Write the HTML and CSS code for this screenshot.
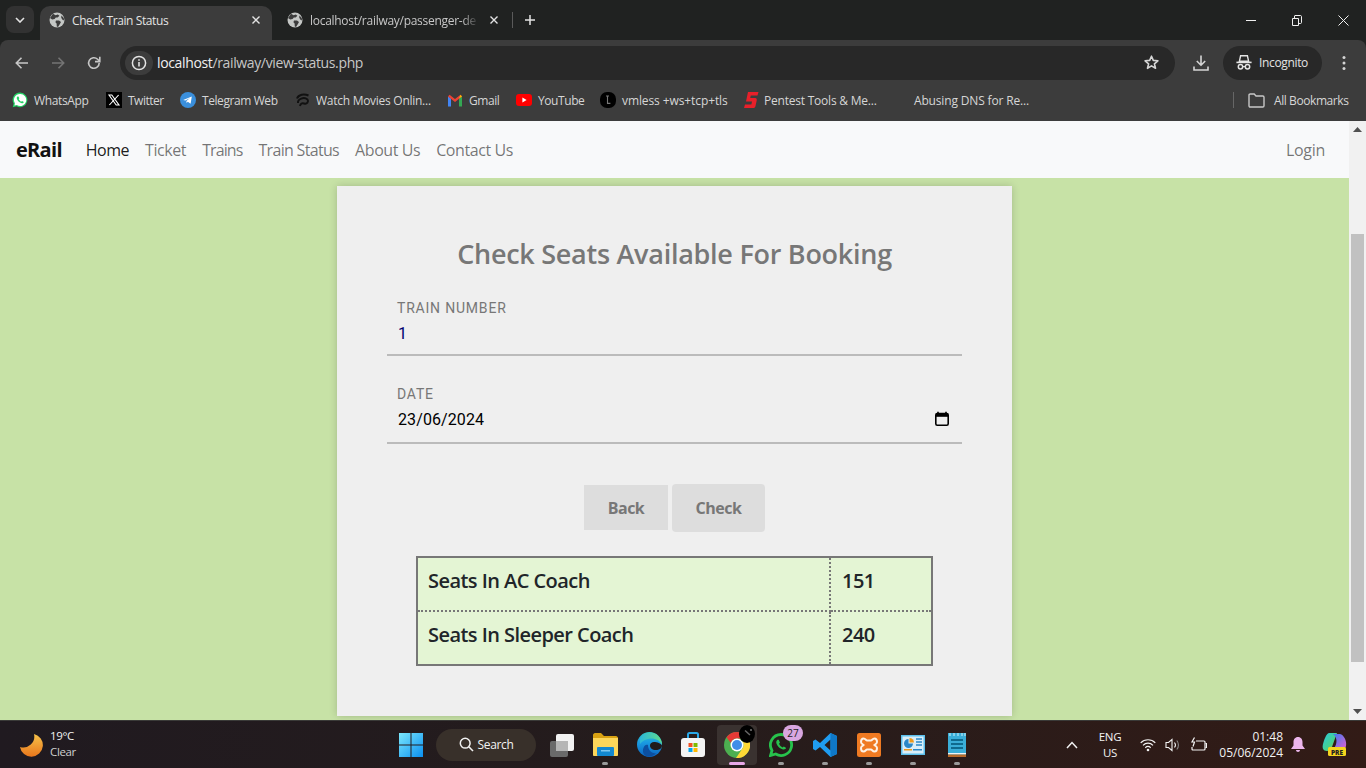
FILE: index.html
```html
<!DOCTYPE html>
<html lang="en">
<head>
<meta charset="utf-8">
<title>Check Train Status</title>
<link rel="stylesheet" href="styles.css">
</head>
<body>
<svg class="defs" width="0" height="0" aria-hidden="true">
  <symbol id="globe" viewBox="0 0 16 16">
    <circle cx="8" cy="8" r="7.5" fill="#c4c7c5"/>
    <path d="M4 1.8 6.6 3.2 8.8 2.4 10.4 3.8 8.6 5.6 6.8 5.4 5.6 7 3.2 7.6 1 6ZM7 8.6 10 8.4 12 10 10.6 12.6 9 15 7.8 14.6 7.6 11.6 6.4 10.2ZM12.4 3.6 14.8 6 15 8.6 13.2 7.6 12.2 5.6Z" fill="#3c3c3c"/>
  </symbol>
  <symbol id="close" viewBox="0 0 10 10">
    <path d="M1.5 1.5 8.5 8.5M8.5 1.5 1.5 8.5" fill="none" stroke="#e3e3e3" stroke-width="1.4"/>
  </symbol>
</svg>

<header class="chrome">
  <div class="tabstrip">
    <div class="tablist-btn"><svg width="10" height="6" viewBox="0 0 10 6"><path d="M1 1 5 5 9 1" fill="none" stroke="#e3e3e3" stroke-width="1.6"/></svg></div>
    <div class="tab tab-active">
      <svg class="fav" width="16" height="16"><use href="#globe"/></svg>
      <span class="tab-title">Check Train Status</span>
      <svg class="tab-x" width="10" height="10"><use href="#close"/></svg>
    </div>
    <div class="tab tab-idle">
      <svg class="fav" width="16" height="16"><use href="#globe"/></svg>
      <span class="tab-title tab-fade">localhost/railway/passenger-de</span>
      <svg class="tab-x" width="10" height="10"><use href="#close"/></svg>
    </div>
    <span class="tab-sep"></span>
    <svg class="tab-plus" width="12" height="12" viewBox="0 0 12 12"><path d="M6 1V11M1 6H11" stroke="#e3e3e3" stroke-width="1.5"/></svg>
    <div class="winctl">
      <span class="winbtn"><svg width="10" height="10" viewBox="0 0 10 10"><path d="M0 5.5H10" stroke="#f0f0f0"/></svg></span>
      <span class="winbtn"><svg width="10" height="11" viewBox="0 0 10 11"><path d="M.5 3.5H6.5V10.5H.5ZM2.5 3.5V1C2.5.8 2.7.5 3 .5H8.5C9 .5 9.5 1 9.5 1.5V7.5C9.5 8 9.2 8.5 8.5 8.5H6.5" fill="none" stroke="#f0f0f0"/></svg></span>
      <span class="winbtn"><svg width="11" height="11" viewBox="0 0 11 11"><path d="M.5.5 10.5 10.5M10.5.5.5 10.5" stroke="#f0f0f0"/></svg></span>
    </div>
  </div>

  <div class="toolbar">
    <div class="nav-ic">
      <svg width="16" height="16" viewBox="0 0 16 16"><path d="M14 8H2.5M7.5 2.8 2.3 8l5.2 5.2" fill="none" stroke="#c7c7c7" stroke-width="1.6"/></svg>
    </div>
    <div class="nav-ic">
      <svg width="16" height="16" viewBox="0 0 16 16"><path d="M2 8H13.5M8.5 2.8 13.7 8l-5.2 5.2" fill="none" stroke="#747474" stroke-width="1.6"/></svg>
    </div>
    <div class="nav-ic">
      <svg width="16" height="16" viewBox="0 0 16 16"><path d="M13.2 8A5.3 5.3 0 1 1 11.6 4.2L13.4 6" fill="none" stroke="#c7c7c7" stroke-width="1.6"/><path d="M13.8 1.8V6.6H9" fill="none" stroke="#c7c7c7" stroke-width="1.6"/></svg>
    </div>
    <div class="omnibox">
      <span class="info-chip"><svg width="16" height="16" viewBox="0 0 16 16"><circle cx="8" cy="8" r="6.6" fill="none" stroke="#e3e3e3" stroke-width="1.5"/><path d="M8 7V11.6M8 4.2V5.8" stroke="#e3e3e3" stroke-width="1.6"/></svg></span>
      <span class="url"><span class="url-host">localhost</span>/railway/view-status.php</span>
      <svg class="star" width="17" height="17" viewBox="0 0 17 17"><path d="M8.5 2.2 10.3 6.4 14.9 6.8 11.4 9.8 12.5 14.3 8.5 11.9 4.5 14.3 5.6 9.8 2.1 6.8 6.7 6.4Z" fill="none" stroke="#d5d5d5" stroke-width="1.6" stroke-linejoin="round"/></svg>
    </div>
    <svg class="dl" width="16" height="18" viewBox="0 0 16 18"><path d="M8 1.5V11M3.8 7 8 11.2 12.2 7M1 12.5V16H15V12.5" fill="none" stroke="#d5d5d5" stroke-width="1.6"/></svg>
    <div class="incog">
      <svg width="16" height="15" viewBox="0 0 16 15"><path d="M4.6 .8H11.4L12.6 6.2H3.4Z" fill="none" stroke="#e3e3e3" stroke-width="1.4"/><path d="M.4 7.4H15.600" stroke="#e3e3e3" stroke-width="1.600"/><circle cx="4.500" cy="11.800" r="2.200" fill="none" stroke="#e3e3e3" stroke-width="1.500"/><circle cx="11.500" cy="11.800" r="2.200" fill="none" stroke="#e3e3e3" stroke-width="1.500"/><path d="M6.800 11.600H9.200" stroke="#e3e3e3" stroke-width="1.200"/></svg>
      <span>Incognito</span>
    </div>
    <svg class="dots" width="4" height="16" viewBox="0 0 4 16"><circle cx="2" cy="2.5" r="1.5" fill="#d5d5d5"/><circle cx="2" cy="8" r="1.5" fill="#d5d5d5"/><circle cx="2" cy="13.5" r="1.5" fill="#d5d5d5"/></svg>
  </div>

  <nav class="bookmarks">
    <a class="bm b1"><svg width="16" height="16" viewBox="0 0 16 16"><path d="M8 .6A7.3 7.3 0 0 0 1.7 11.6L.7 15.3 4.5 14.3A7.3 7.3 0 1 0 8 .6Z" fill="#25d366"/><path d="M8 2A6 6 0 0 0 2.9 11.2L2.5 13.5 4.8 12.9A6 6 0 1 0 8 2Z" fill="#fff"/><path d="M5.6 4.4C5 4.8 4.6 5.6 4.8 6.6 5.2 8.6 7.4 11 9.8 11.3 10.8 11.4 11.6 10.8 11.8 10L10 8.9 9.2 9.7C8.2 9.4 7 8.1 6.7 7.1L7.4 6.3 6.4 4.4Z" fill="#25d366"/></svg><span>WhatsApp</span></a>
    <a class="bm b2"><svg width="16" height="16" viewBox="0 0 16 16"><rect width="16" height="16" fill="#000"/><path d="M3 3H5.8L13 13H10.2ZM12.6 3 3.4 13" fill="none" stroke="#fff" stroke-width="1.1"/></svg><span>Twitter</span></a>
    <a class="bm b3"><svg width="16" height="16" viewBox="0 0 16 16"><circle cx="8" cy="8" r="8" fill="#3a8fdc"/><path d="M3.2 8 11.8 4.4 10.6 11.8 7.8 9.8 6.6 11 6.4 8.9 10 6 5.4 8.6Z" fill="#fff"/></svg><span>Telegram Web</span></a>
    <a class="bm b4"><svg width="16" height="16" viewBox="0 0 16 16"><path d="M2 6.500C3.500 2.500 9 1.500 13.500 3.500M3 11C2.500 7 9 4.500 12.500 7.500 14 9.500 12 12.500 9 11.500 7 11 5.500 11.500 5 14" fill="none" stroke="#111" stroke-width="2"/></svg><span>Watch Movies Onlin...</span></a>
    <a class="bm b5"><svg width="16" height="13" viewBox="0 0 16 13"><path d="M1 12.5V2.5L4 4.5V12.5Z" fill="#4285f4"/><path d="M12 12.5V4.5L15 2.5V12.5Z" fill="#34a853"/><path d="M1 2.5 2.5 .8 8 5 13.5 .8 15 2.5 8 8Z" fill="#ea4335"/><path d="M12 4.5 13.5 .8 15 2.5Z" fill="#fbbc04"/></svg><span>Gmail</span></a>
    <a class="bm b6"><svg width="16" height="12" viewBox="0 0 16 12"><rect width="16" height="12" rx="3" fill="#f00"/><path d="M6.4 3.4V8.6L10.6 6Z" fill="#fff"/></svg><span>YouTube</span></a>
    <a class="bm b7"><svg width="16" height="16" viewBox="0 0 16 16"><rect width="16" height="16" rx="7" fill="#000"/><path d="M6 4H9M7.5 4V11.4H10.4" fill="none" stroke="#777" stroke-width="1.1"/></svg><span>vmless +ws+tcp+tls</span></a>
    <a class="bm b8"><svg width="16" height="18" viewBox="0 0 16 18"><path d="M5 1H15.500L14.500 4.500H7.800L7.200 7H12.200C13.600 7 14 8 13.700 9.400L12.500 15C12.200 16.400 11.400 17 10.200 17H1L2 13.400H8.400L9 10.400H3Z" fill="#e8202a"/></svg><span>Pentest Tools &amp; Me...</span></a>
    <a class="bm b9"><span>Abusing DNS for Re...</span></a>
    <span class="bm-sep"></span>
    <a class="bm b10"><svg width="17" height="15" viewBox="0 0 17 15"><path d="M1 2.2C1 1.5 1.5 1 2.2 1H6.2L8 3H14.8C15.5 3 16 3.5 16 4.2V12.8C16 13.5 15.5 14 14.8 14H2.2C1.5 14 1 13.5 1 12.8Z" fill="none" stroke="#c7c7c7" stroke-width="1.4"/></svg><span>All Bookmarks</span></a>
  </nav>
</header>

<div class="viewport">
  <div class="page">
    <div class="navbar">
      <span class="brand">eRail</span>
      <a class="nav-link nav-current">Home</a>
      <a class="nav-link">Ticket</a>
      <a class="nav-link nav-trains">Trains</a>
      <a class="nav-link nav-status">Train Status</a>
      <a class="nav-link">About Us</a>
      <a class="nav-link">Contact Us</a>
      <a class="nav-link nav-login">Login</a>
    </div>
    <main class="content">
      <section class="card">
        <h1 class="card-title">Check Seats Available For Booking</h1>
        <form class="form">
          <div class="field field-num">
            <label class="field-label" for="train">Train Number</label>
            <div class="field-row"><input id="train" class="field-input input-num" type="text" value="1"></div>
          </div>
          <div class="field field-date">
            <label class="field-label" for="date">Date</label>
            <div class="field-row">
              <input id="date" class="field-input" type="text" value="23/06/2024">
              <svg class="cal" width="16" height="16" viewBox="0 0 16 16"><path d="M4 .8V3M12 .8V3" stroke="#000" stroke-width="1.6"/><rect x="1.8" y="2.6" width="12.4" height="11.6" rx="1.4" fill="none" stroke="#000" stroke-width="1.6"/><rect x="2" y="3" width="12" height="2.8" fill="#000"/></svg>
            </div>
          </div>
          <div class="actions">
            <button type="button" class="btn btn-back">Back</button>
            <button type="button" class="btn btn-check">Check</button>
          </div>
        </form>
        <table class="seats">
          <tr><td class="seat-name">Seats In AC Coach</td><td class="seat-num">151</td></tr>
          <tr><td class="seat-name">Seats In Sleeper Coach</td><td class="seat-num">240</td></tr>
        </table>
      </section>
    </main>
  </div>
  <div class="scrollbar">
    <svg width="9" height="5" viewBox="0 0 9 5"><path d="M4.5 0 9 5H0Z" fill="#505050"/></svg>
    <div class="thumb"></div>
    <svg width="9" height="5" viewBox="0 0 9 5"><path d="M0 0H9L4.5 5Z" fill="#505050"/></svg>
  </div>
</div>

<footer class="taskbar">
  <div class="weather">
    <svg width="24" height="24" viewBox="0 0 24 24"><defs><linearGradient id="moon" x1="0" y1="0" x2="0" y2="1"><stop offset="0" stop-color="#f7c34a"/><stop offset="1" stop-color="#e8761c"/></linearGradient></defs><path d="M15 1A11.500 11.500 0 1 1 1 14 11 11 0 0 0 15 1Z" fill="url(#moon)"/></svg>
    <div class="weather-text"><span>19°C</span><span class="dim">Clear</span></div>
  </div>
  <div class="tb-cell">
    <svg width="24" height="24" viewBox="0 0 24 24"><defs><linearGradient id="win" x1="0" y1="0" x2="1" y2="1"><stop offset="0" stop-color="#7ce8fc"/><stop offset="1" stop-color="#0a8ff0"/></linearGradient></defs><path d="M0 0H11.5V11.5H0ZM12.5 0H24V11.5H12.5ZM0 12.5H11.5V24H0ZM12.5 12.5H24V24H12.5Z" fill="url(#win)"/></svg>
  </div>
  <div class="search-pill">
    <svg width="15" height="15" viewBox="0 0 15 15"><circle cx="6.2" cy="6.2" r="4.9" fill="none" stroke="#f2f2f2" stroke-width="1.5"/><path d="M9.8 9.8 14 14" stroke="#f2f2f2" stroke-width="1.6"/></svg>
    <span>Search</span>
  </div>
  <div class="tb-cell tb-taskview">
    <svg width="24" height="24" viewBox="0 0 24 24"><rect x="0" y="8" width="18" height="16" rx="2" fill="#6a6a6a"/><rect x="6" y="1" width="18" height="17" rx="2" fill="#f2f2f2"/><rect x="6" y="8" width="12" height="10" fill="#b5b5b5"/></svg>
  </div>
  <div class="app"><svg width="25" height="23" viewBox="0 0 25 23"><path d="M0 2C0 1 1 0 2 0H8L11 3H23C24 3 25 4 25 5V8H0Z" fill="#d8a112"/><path d="M0 5H25V22C25 22.500 24.500 23 24 23H1C.5 23 0 22.500 0 22Z" fill="#fbd65a"/><rect x="4" y="14" width="17" height="9" rx="1" fill="#1288d0"/><rect x="8" y="17" width="9" height="1.500" fill="#7cc8f0"/></svg><i class="dot"></i></div>
  <div class="app"><svg width="25" height="25" viewBox="0 0 25 25"><defs><linearGradient id="edge" x1="0" y1="1" x2="0" y2="0"><stop offset="0" stop-color="#0a62c0"/><stop offset=".6" stop-color="#1b9de2"/><stop offset="1" stop-color="#30c8c0"/></linearGradient><linearGradient id="edge2" x1="0" y1="0" x2="1" y2="0"><stop offset="0" stop-color="#2db8d8"/><stop offset="1" stop-color="#5fdc8a"/></linearGradient></defs><circle cx="12.500" cy="12.500" r="12.500" fill="url(#edge)"/><path d="M3 6C6 1 12 0 16 1 22 2.500 25 8 25 13 23 8 18 6 13 6.500 9 7 5 9 3 12Z" fill="url(#edge2)"/><path d="M25 13.500C25 16.500 22 18 19 18 15 18 13 16 13 13.500 13 11 15.500 9.500 18 10 22 10.500 24.500 12 25 13.500Z" fill="#211b1a"/><path d="M11 13C11 18 14 21 19 21.500 16 24.500 11 25.500 8 23.500 5 21 5.500 16 8 13.500 9 12.500 10 12.500 11 13Z" fill="#0c4fa0"/></svg></div>
  <div class="app"><svg width="24" height="25" viewBox="0 0 24 25"><path d="M7 7V2.500C7 1.500 7.500 1 8.500 1H15.500C16.500 1 17 1.500 17 2.500V7" fill="none" stroke="#29a8e8" stroke-width="2"/><rect y="6" width="24" height="19" rx="3" fill="#f4f4f4"/><path d="M7.500 11H11.500V15H7.500Z" fill="#f25022"/><path d="M12.500 11H16.500V15H12.500Z" fill="#7fba00"/><path d="M7.500 16H11.500V20H7.500Z" fill="#00a4ef"/><path d="M12.500 16H16.500V20H12.500Z" fill="#ffb900"/></svg></div>
  <div class="app app-active">
    <svg width="26" height="26" viewBox="0 0 26 26"><circle cx="13" cy="13" r="13" fill="#4caf50"/><path d="M13 0A13 13 0 0 1 24.300 6.500H13A6.500 6.500 0 0 0 6.800 11L2.500 5.300A13 13 0 0 1 13 0Z" fill="#e53935"/><path d="M24.300 6.500A13 13 0 0 1 12 26L18.600 16.300A6.500 6.500 0 0 0 18.600 9.700Z" fill="#fdd835"/><circle cx="13" cy="13" r="6.500" fill="#fff"/><circle cx="13" cy="13" r="5" fill="#3f8de8"/></svg>
    <svg class="badge-incog" width="16" height="18" viewBox="0 0 16 18"><ellipse cx="8" cy="9" rx="8" ry="9" fill="#000"/><path d="M6 5.500 11 10" stroke="#666" stroke-width="1.500"/><circle cx="12" cy="5" r="1" fill="#777"/></svg>
    <i class="dot dot-active"></i>
  </div>
  <div class="app">
    <svg width="24" height="24" viewBox="0 0 24 24"><path d="M12 1.500A10.500 10.500 0 0 0 3 17.500L1.500 22.500 6.700 21A10.500 10.500 0 1 0 12 1.500Z" fill="none" stroke="#27c24c" stroke-width="2.800"/><path d="M8.500 6.800C7.500 7.500 7 8.800 7.400 10.200 8.200 13 11 15.800 14 16.400 15.500 16.700 16.800 16 17.200 15L14.800 13.400 13.600 14.500C12.200 14 10.500 12.200 10 10.800L11 9.700 9.700 6.800Z" fill="#27c24c"/></svg>
    <span class="badge-count">27</span>
    <i class="dot"></i>
  </div>
  <div class="app"><svg width="24" height="24" viewBox="0 0 24 24"><path d="M17.500 0 24 3V21L17.500 24 7 14 2.500 17.500 0 16V8L2.500 6.500 7 10ZM17.500 6.500 11.500 12 17.500 17.500Z" fill="#1f9cf0"/><path d="M17.500 0 24 3V21L17.500 24Z" fill="#0f78c8"/></svg><i class="dot"></i></div>
  <div class="app"><svg width="24" height="24" viewBox="0 0 24 24"><rect width="24" height="24" rx="2.500" fill="#ef7a22"/><path d="M6.500 5.500C8.500 5.500 9 7.500 10 7.500H14C15 7.500 15.500 5.500 17.500 5.500 19.500 5.500 20 7.500 20 9 20 10.500 18.500 11 17.500 12 18.500 13 20 13.500 20 15 20 16.500 19.500 18.500 17.500 18.500 15.500 18.500 15 16.500 14 16.500H10C9 16.500 8.500 18.500 6.500 18.500 4.500 18.500 4 16.500 4 15 4 13.500 5.500 13 6.500 12 5.500 11 4 10.500 4 9 4 7.500 4.500 5.500 6.500 5.500Z" fill="none" stroke="#fdf1e4" stroke-width="2"/></svg><i class="dot"></i></div>
  <div class="app"><svg width="24" height="20" viewBox="0 0 24 20"><rect width="24" height="20" fill="#5cc0ec"/><rect x="1.500" y="1.500" width="21" height="17" fill="#d9eef9"/><path d="M7.500 4A4.500 4.500 0 1 0 12 8.500H7.500Z" fill="#2a88c8"/><path d="M8.500 3A4.500 4.500 0 0 1 13 7.500H8.500Z" fill="#ef9a1c"/><path d="M15 4H21M15 7H21M15 10H21" stroke="#2a88c8" stroke-width="1.400"/><rect x="3" y="14" width="8" height="1.500" fill="#ef9a1c"/><rect x="12" y="14" width="9" height="1.500" fill="#2a88c8"/></svg><i class="dot"></i></div>
  <div class="app"><svg width="18" height="24" viewBox="0 0 18 24"><rect width="18" height="24" fill="#3aaed8"/><rect y="20" width="18" height="1.500" fill="#f2f2f2"/><rect y="21.500" width="18" height="2.500" fill="#b66a2a"/><path d="M2 0V3M6 0V3M10 0V3M14 0V3M17 0V3" stroke="#9adcf0" stroke-width="1.500"/><path d="M3 7H15M3 11H15M3 15H15" stroke="#0f6a8e" stroke-width="2"/></svg><i class="dot"></i></div>
  <div class="tray">
    <svg class="chev" width="12" height="8" viewBox="0 0 12 8"><path d="M1 7 6 1.500 11 7" fill="none" stroke="#f2f2f2" stroke-width="1.500"/></svg>
    <div class="lang"><span>ENG</span><span>US</span></div>
    <svg class="wifi" width="16" height="14" viewBox="0 0 16 14"><path d="M.7 4.800C4.700 .7 11.300 .7 15.300 4.800M3 7.300C5.800 4.500 10.200 4.500 13 7.300M5.300 9.700C6.800 8.300 9.200 8.300 10.700 9.700" fill="none" stroke="#f2f2f2" stroke-width="1.200"/><circle cx="8" cy="12" r="1.300" fill="#f2f2f2"/></svg>
    <svg class="vol" width="15" height="14" viewBox="0 0 15 14"><path d="M1 4.500H3.500L7 1.500V12.500L3.500 9.500H1Z" fill="none" stroke="#f2f2f2" stroke-width="1.100"/><path d="M9.500 4.500C10.700 6 10.700 8 9.500 9.500" fill="none" stroke="#f2f2f2" stroke-width="1.100"/><path d="M11.800 2.500C14 5 14 9 11.800 11.500" fill="none" stroke="#888" stroke-width="1.100"/></svg>
    <svg class="batt" width="17" height="15" viewBox="0 0 17 15"><path d="M6 4H14C14.600 4 15 4.400 15 5V12C15 12.600 14.600 13 14 13H3C2.400 13 2 12.600 2 12V10" fill="none" stroke="#f2f2f2" stroke-width="1.200"/><path d="M15.500 6.500H16.500V10.500H15.500" fill="none" stroke="#f2f2f2" stroke-width="1.100"/><path d="M4.500 .5 2 5H4.500L3 9.500" fill="none" stroke="#f2f2f2" stroke-width="1.200"/></svg>
    <div class="clock"><span>01:48</span><span>05/06/2024</span></div>
    <svg class="bell" width="14" height="15" viewBox="0 0 14 15"><path d="M7 0C10 0 11.500 2.500 11.500 5V8.500L14 12H0L2.500 8.500V5C2.500 2.500 4 0 7 0ZM5 13H9C9 14.300 8 15 7 15S5 14.300 5 13Z" fill="#ecb6ec"/></svg>
    <span class="copilot">
      <svg width="25" height="24" viewBox="0 0 25 24"><defs><linearGradient id="cop" x1="0" y1="0" x2="1" y2="1"><stop offset="0" stop-color="#2ac8e0"/><stop offset=".6" stop-color="#46d08a"/><stop offset="1" stop-color="#f0a030"/></linearGradient><linearGradient id="cop2" x1="0" y1="0" x2="1" y2="1"><stop offset="0" stop-color="#3a7af0"/><stop offset="1" stop-color="#e060d0"/></linearGradient></defs><path d="M7 0H15C13 5 11.500 10 10 14 9 17 7 18 5 18 1 18 0 15 1 11 2 7 4 1 7 0Z" fill="url(#cop)"/><path d="M11 1H18C22 2 25 8 24 13 23.500 16 21 17 18 16.500L12 15.500C15 11 16 5 11 1Z" fill="url(#cop2)"/><rect x="6" y="14" width="18" height="9" rx="1.500" fill="#f4d51e"/><text class="pre" x="15" y="21.500" text-anchor="middle">PRE</text></svg>
    </span>
  </div>
</footer>
</body>
</html>
```

FILE: styles.css
```css
* { box-sizing: border-box; }
html, body { margin: 0; padding: 0; height: 768px; overflow: hidden; }
body { display: flex; flex-direction: column; font-family: "Open Sans", "Noto Sans", sans-serif; background: #202221; }
.defs { position: absolute; }
svg { display: block; flex: none; }

/* browser chrome */
.chrome { flex: none; height: 121px; display: flex; flex-direction: column; background: #202221; color: #e3e3e3; font-size: 12px; }
.tabstrip { height: 40px; display: flex; align-items: flex-start; padding: 6px 0 0 6px; }
.tablist-btn { width: 28px; height: 27px; border-radius: 8px; background: #323232; display: flex; align-items: center; justify-content: center; }
.tab { height: 34px; display: flex; align-items: center; padding: 0 11px 6px 9px; border-radius: 10px 10px 0 0; letter-spacing: -.4px; white-space: nowrap; }
.tab-active { width: 232px; margin-left: 6px; background: #3c3c3c; }
.tab-idle { width: 241px; padding-left: 15px; padding-right: 14px; color: #c7c7c7; letter-spacing: -.28px; }
.fav { margin-right: 7px; }
.tab-title { flex: 1; overflow: hidden; min-width: 0; }
.tab-fade { margin-right: 10px; -webkit-mask-image: linear-gradient(90deg, #000 90%, transparent); mask-image: linear-gradient(90deg, #000 90%, transparent); }
.tab-sep { width: 1px; height: 16px; margin: 6px 0 0 -1px; background: #5a5a5a; }
.tab-plus { margin: 8px 0 0 11px; }
.winctl { margin-left: auto; margin-top: -6px; display: flex; }
.winbtn { width: 46px; height: 40px; display: flex; align-items: center; justify-content: center; }

.toolbar { height: 45px; background: #3c3c3c; border-radius: 8px 8px 0 0; display: flex; align-items: center; padding: 0 0 0 4px; }
.nav-ic { width: 36px; height: 34px; display: flex; align-items: center; justify-content: center; }
.omnibox { margin-left: 8px; width: 1055px; height: 34px; border-radius: 17px; background: #282828; display: flex; align-items: center; padding: 0 15px 0 5px; }
.info-chip { width: 28px; height: 24px; border-radius: 12px; background: #3c3c3c; display: flex; align-items: center; justify-content: center; }
.url { margin-left: 4px; font-size: 14px; letter-spacing: -.36px; color: #c7c7c7; flex: 1; }
.url-host { color: #f1f1f1; }
.dl { margin-left: 18px; }
.incog { margin-left: 14px; width: 99px; height: 34px; border-radius: 17px; background: #282828; display: flex; align-items: center; gap: 7px; padding-left: 13px; letter-spacing: -.35px; }
.dots { margin-left: 20px; }

.bookmarks { height: 36px; background: #3c3c3c; display: flex; align-items: center; color: #d6d6d6; padding: 0 0 6px 12px; letter-spacing: -.42px; white-space: nowrap; }
.bm { display: flex; align-items: center; gap: 6px; }
.b1 { width: 94px; letter-spacing: -.35px; }
.b2 { width: 74px; letter-spacing: -.5px; }
.b3 { width: 115px; }
.b4 { width: 153px; gap: 5px; letter-spacing: -.27px; }
.b5 { width: 68px; margin-left: -1px; }
.b6 { width: 84px; margin-left: 1px; }
.b7 { width: 145px; letter-spacing: -.1px; }
.b8 { width: 171px; margin-left: -2px; gap: 5px; letter-spacing: -.22px; }
.b9 { width: 319px; letter-spacing: -.16px; }
.bm-sep { width: 1px; height: 16px; background: #666; margin-right: 14px; }
.b10 { gap: 9px; letter-spacing: -.42px; }

/* page area */
.viewport { flex: none; height: 599px; display: flex; overflow: hidden; background: #c7e2a6; }
.page { flex: 1; min-width: 0; display: flex; flex-direction: column; font-family: "Open Sans", sans-serif; }
.navbar { flex: none; height: 57px; background: #f8f9fa; display: flex; align-items: center; padding: 0 16px; font-size: 16px; }
.brand { font-size: 20px; font-weight: 700; color: #111; margin-right: 16px; letter-spacing: -.7px; }
.nav-link { padding: 0 8px; color: rgba(0, 0, 0, .55); letter-spacing: -.42px; }
.nav-trains { letter-spacing: -.9px; }
.nav-status { letter-spacing: -.68px; }
.nav-current { color: rgba(0, 0, 0, .9); letter-spacing: -.5px; }
.nav-login { margin-left: auto; letter-spacing: -.3px; }

.content { flex: 1; min-height: 0; display: flex; justify-content: center; padding-top: 8px; }
.card { width: 675px; height: 530px; flex: none; background: #efefef; padding: 50px 50px 0; box-shadow: 0 0 8px rgba(0, 0, 0, .18); }
.card-title { margin: 0; text-align: center; font-size: 27px; font-weight: 600; line-height: 36px; color: #777; letter-spacing: -.27px; }

.field { display: flex; flex-direction: column; border-bottom: 2px solid #bbb; font-family: Roboto, sans-serif; }
.field-num { margin-top: 28px; height: 56px; }
.field-date { margin-top: 30px; height: 58px; }
.field-label { padding-left: 10px; font-size: 14px; line-height: 16px; letter-spacing: .8px; text-transform: uppercase; color: #777; }
.field-row { display: flex; align-items: center; padding: 6px 12px 0 11px; }
.field-input { flex: 1; min-width: 0; border: 0; padding: 0; background: transparent; font: 16px/24px Roboto, sans-serif; letter-spacing: .1px; color: #000; outline: 0; }
.input-num { color: #00006e; }
.cal { margin-top: -2px; }

.actions { display: flex; justify-content: center; align-items: flex-start; gap: 4px; margin-top: 40px; }
.btn { border: 0; padding: 0; background: #ddd; color: #777; font: 700 16px "Open Sans", sans-serif; letter-spacing: -.5px; }
.btn-back { width: 84px; height: 45px; margin-top: 1px; }
.btn-check { width: 93px; height: 48px; border-radius: 4px; }

.seats { margin: 24px 0 0 29px; width: 517px; height: 110px; border-collapse: collapse; border: 2px solid #777; background: #e4f5d4; color: #212529; font-size: 20px; font-weight: 600; letter-spacing: -.55px; }
.seats td { padding: 0 10px 8px; border: 2px dotted #777; }
.seats .seat-num { width: 102px; padding-left: 11px; }

.scrollbar { flex: none; width: 17px; background: #f1f1f1; display: flex; flex-direction: column; align-items: center; padding-top: 6px; }
.thumb { width: 13px; height: 428px; background: #c1c1c1; margin: 102px 0 47px; }

/* taskbar */
.taskbar { flex: none; height: 48px; display: flex; align-items: center; color: #f2f2f2; font-size: 12px; letter-spacing: -.35px; background: linear-gradient(90deg, #201a20 0%, #251c1c 50%, #321b16 100%); border-top: 1px solid #3a3a38; }
.weather { width: 389px; display: flex; align-items: center; gap: 7px; padding-left: 19px; }
.weather-text { display: flex; flex-direction: column; line-height: 16px; font-size: 11.5px; margin-top: -1px; }
.dim { color: #cfcfcf; }
.tb-cell { width: 44px; height: 40px; display: flex; align-items: center; justify-content: center; }
.search-pill { margin-left: 3px; width: 100px; height: 32px; border-radius: 16px; background: #38302a; display: flex; align-items: center; justify-content: center; gap: 4px; font-size: 12px; font-weight: 500; }
.tb-taskview { margin-left: 4px; margin-right: -1px; }
.app { position: relative; width: 44px; height: 47px; display: flex; align-items: center; justify-content: center; }
.dot { position: absolute; left: 19px; bottom: 3px; width: 6px; height: 3px; border-radius: 2px; background: #9a9a9a; }
.app-active { background: #3a3230; border-radius: 4px; width: 40px; height: 40px; margin: 0 2px; }
.dot-active { left: 12px; bottom: 0; width: 16px; background: #e8a8e8; }
.badge-incog { position: absolute; right: 2px; top: 0; }
.badge-count { position: absolute; left: 24px; top: 4px; width: 20px; height: 16px; border-radius: 8px; background: #d8a6e0; color: #222; font-size: 10px; line-height: 16px; text-align: center; letter-spacing: 0; }
.tray { flex: 1; display: flex; align-items: center; }
.chev { margin-left: 87px; }
.lang { margin-left: 20px; width: 24px; display: flex; flex-direction: column; align-items: center; line-height: 16px; font-size: 11.5px; }
.wifi { margin-left: 18px; }
.vol { margin-left: 9px; }
.batt { margin-left: 10px; }
.clock { margin-left: 10px; width: 66px; display: flex; flex-direction: column; align-items: flex-end; line-height: 16px; font-size: 12px; letter-spacing: 0; }
.bell { margin-left: 8px; }
.copilot { margin-left: 17px; }
.pre { font-size: 6.5px; font-weight: 800; fill: #222; letter-spacing: 0; }
```
